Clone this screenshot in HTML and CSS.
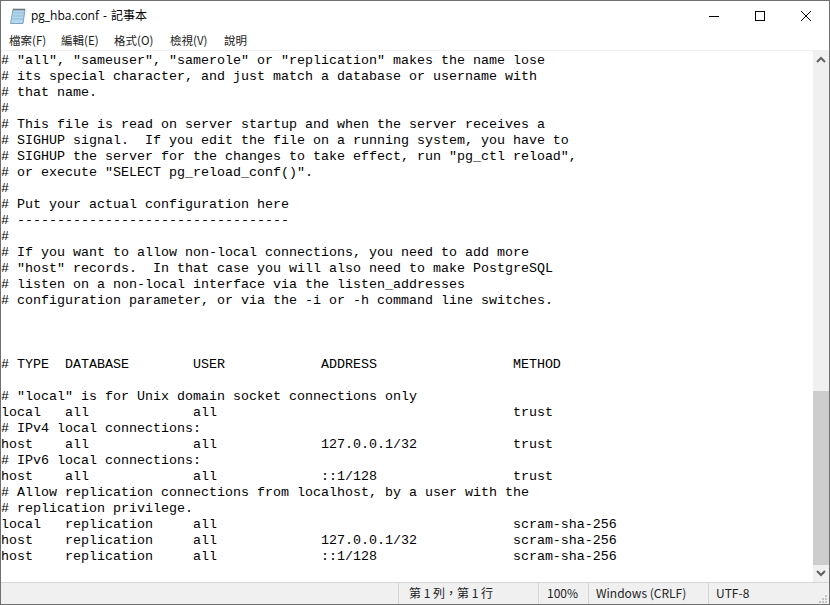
FILE: index.html
```html
<!DOCTYPE html>
<html lang="zh-Hant">
<head>
<meta charset="utf-8">
<title>pg_hba.conf - 記事本</title>
<link rel="stylesheet" href="styles.css">
</head>
<body>
<div class="window">
  <header class="titlebar">
    <svg class="app-icon" width="16" height="16" viewBox="0 0 16 16">
      <path d="M3 1.500h12l-2 14h-12.500z" fill="#b5d8ee" stroke="#7ea3bd"/>
      <path d="M3 5h11M2.500 8h11M2 11h11" stroke="#8fbcd8" fill="none"/>
      <path d="M4 2.500v-2M6 2.500v-2M8 2.500v-2M10 2.500v-2M12 2.500v-2M14 2.500v-2" stroke="#555" fill="none"/>
    </svg>
    <span class="title">pg_hba.conf - 記事本</span>
    <div class="controls">
      <button class="control" aria-label="最小化"><svg width="10" height="10" viewBox="0 0 10 10"><path d="M0 5.500h10" stroke="#000" fill="none"/></svg></button>
      <button class="control" aria-label="最大化"><svg width="10" height="10" viewBox="0 0 10 10"><rect x="0.500" y="0.500" width="9" height="9" stroke="#000" fill="none"/></svg></button>
      <button class="control" aria-label="關閉"><svg width="10" height="10" viewBox="0 0 10 10"><path d="M0 0l10 10M10 0l-10 10" stroke="#000" fill="none"/></svg></button>
    </div>
  </header>
  <nav class="menubar">
    <span class="menu">檔案(F)</span>
    <span class="menu">編輯(E)</span>
    <span class="menu">格式(O)</span>
    <span class="menu">檢視(V)</span>
    <span class="menu">說明</span>
  </nav>
  <main class="client">
    <pre class="editor"># "all", "sameuser", "samerole" or "replication" makes the name lose
# its special character, and just match a database or username with
# that name.
#
# This file is read on server startup and when the server receives a
# SIGHUP signal.  If you edit the file on a running system, you have to
# SIGHUP the server for the changes to take effect, run "pg_ctl reload",
# or execute "SELECT pg_reload_conf()".
#
# Put your actual configuration here
# ----------------------------------
#
# If you want to allow non-local connections, you need to add more
# "host" records.  In that case you will also need to make PostgreSQL
# listen on a non-local interface via the listen_addresses
# configuration parameter, or via the -i or -h command line switches.



# TYPE  DATABASE        USER            ADDRESS                 METHOD

# "local" is for Unix domain socket connections only
local   all             all                                     trust
# IPv4 local connections:
host    all             all             127.0.0.1/32            trust
# IPv6 local connections:
host    all             all             ::1/128                 trust
# Allow replication connections from localhost, by a user with the
# replication privilege.
local   replication     all                                     scram-sha-256
host    replication     all             127.0.0.1/32            scram-sha-256
host    replication     all             ::1/128                 scram-sha-256</pre>
    <div class="scrollbar">
      <svg class="arrow" width="16" height="17" viewBox="0 0 16 17"><path d="M4 11l4-4 4 4" stroke="#606060" stroke-width="2" fill="none"/></svg>
      <div class="track"><div class="thumb"></div></div>
      <svg class="arrow" width="16" height="17" viewBox="0 0 16 17"><path d="M4 6l4 4 4-4" stroke="#606060" stroke-width="2" fill="none"/></svg>
    </div>
  </main>
  <footer class="statusbar">
    <span class="cell cell-fill"></span>
    <span class="cell cell-pos">第 1 列，第 1 行</span>
    <span class="cell cell-zoom">100%</span>
    <span class="cell cell-eol">Windows (CRLF)</span>
    <span class="cell cell-enc">UTF-8</span>
    <svg class="grip" width="10" height="10" viewBox="0 0 10 10"><path d="M7 1h2v2h-2zM4 4h2v2h-2zM7 4h2v2h-2zM1 7h2v2h-2zM4 7h2v2h-2zM7 7h2v2h-2z" fill="#c4c4c4"/></svg>
  </footer>
</div>
</body>
</html>
```
FILE: styles.css
```css
html, body {
  margin: 0;
  padding: 0;
  background: #fff;
}
.window {
  box-sizing: border-box;
  width: 830px;
  height: 605px;
  display: flex;
  flex-direction: column;
  border: 1px solid #707070;
  background: #fff;
  overflow: hidden;
  font-family: "Noto Sans CJK TC", "Noto Sans", sans-serif;
  color: #000;
}
.titlebar {
  flex: none;
  height: 29px;
  display: flex;
  align-items: center;
  padding-left: 9px;
}
.app-icon {
  flex: none;
  margin-right: 5px;
}
.title {
  font-family: "Open Sans", "Noto Sans CJK TC", sans-serif;
  font-size: 12px;
  line-height: 16px;
  word-spacing: 1px;
}
.controls {
  margin-left: auto;
  display: flex;
}
.control {
  width: 46px;
  height: 29px;
  padding: 0;
  border: 0;
  background: none;
  display: flex;
  align-items: center;
  justify-content: center;
}
.menubar {
  flex: none;
  height: 20px;
  display: grid;
  grid-template-columns: 52px 53px 56px 54px auto;
  justify-content: start;
  align-items: center;
  padding-left: 8px;
  font-size: 11.500px;
  color: #222;
}
.client {
  flex: 1;
  min-height: 0;
  display: flex;
  border-top: 1px solid #f0f0f0;
}
.editor {
  flex: 1;
  margin: 0;
  padding: 2px 0 0 0;
  overflow: hidden;
  font-family: "Liberation Mono", "DejaVu Sans Mono", monospace;
  font-size: 13.333px;
  line-height: 16px;
  color: #000;
}
.scrollbar {
  flex: none;
  width: 16px;
  display: flex;
  flex-direction: column;
  background: #f0f0f0;
}
.arrow {
  flex: none;
  display: block;
}
.track {
  flex: 1;
  display: flex;
  flex-direction: column;
  justify-content: flex-end;
}
.thumb {
  height: 174px;
  background: #cdcdcd;
}
.statusbar {
  flex: none;
  height: 21px;
  display: flex;
  align-items: center;
  border-top: 1px solid #d7d7d7;
  background: #f0f0f0;
  font-size: 12px;
  color: #222;
  position: relative;
}
.cell {
  box-sizing: border-box;
  height: 21px;
  line-height: 20px;
  white-space: nowrap;
  border-left: 1px solid #d7d7d7;
}
.cell-fill {
  width: 397px;
  border-left: 0;
}
.cell-pos {
  width: 140px;
  padding-left: 10px;
}
.cell-zoom {
  width: 50px;
  padding-left: 8px;
}
.cell-eol {
  width: 120px;
  padding-left: 7px;
}
.cell-enc {
  flex: 1;
  padding-left: 7px;
}
.grip {
  position: absolute;
  right: 1px;
  bottom: 0;
}
```
